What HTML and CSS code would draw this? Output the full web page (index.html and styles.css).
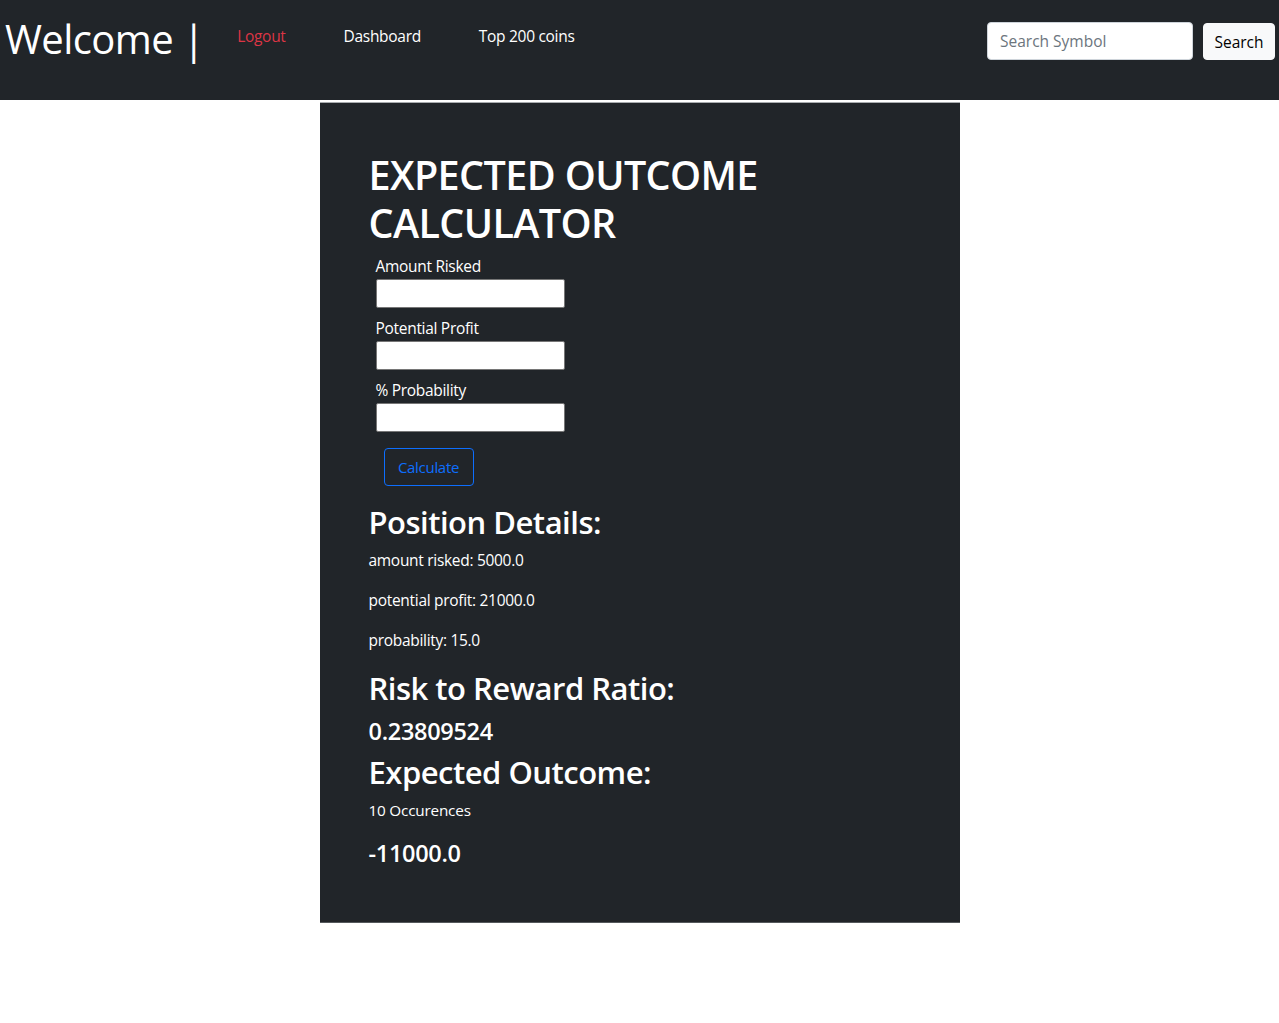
FILE: index.html
```html
<!DOCTYPE html>
<html>
<head>
<meta charset="utf-8">
<link rel="stylesheet" href="styles.css">
</head>
<body>
<nav class="navbar">
  <div class="brand">Welcome |</div>
  <ul class="links">
    <li><a class="link logout" href="#">Logout</a></li>
    <li><a class="link" href="#">Dashboard</a></li>
    <li><a class="link" href="#">Top 200 coins</a></li>
  </ul>
  <form class="search">
    <input class="search-input" type="text" placeholder="Search Symbol">
    <button class="search-btn" type="button">Search</button>
  </form>
</nav>
<main class="panel">
  <h1 class="title">EXPECTED OUTCOME CALCULATOR</h1>
  <form class="calc">
    <label class="field-label">Amount Risked</label>
    <input class="field" type="text">
    <label class="field-label">Potential Profit</label>
    <input class="field" type="text">
    <label class="field-label">% Probability</label>
    <input class="field" type="text">
    <button class="calc-btn" type="button">Calculate</button>
  </form>
  <h2 class="h2">Position Details:</h2>
  <p class="p">amount risked: 5000.0</p>
  <p class="p">potential profit: 21000.0</p>
  <p class="p">probability: 15.0</p>
  <h2 class="h2">Risk to Reward Ratio:</h2>
  <h4 class="h4">0.23809524</h4>
  <h2 class="h2">Expected Outcome:</h2>
  <p class="small">10 Occurences</p>
  <h4 class="h4">-11000.0</h4>
</main>
</body>
</html>
```
FILE: styles.css
```css
* { box-sizing: border-box; }
html, body { margin: 0; padding: 0; }
body {
  font-family: "Open Sans", "Noto Sans", sans-serif;
  font-size: 16px;
  line-height: 1.5;
  color: #212529;
  background: #fff;
}
.navbar {
  background: #212529;
  height: 100px;
  display: flex;
  align-items: flex-start;
  padding: 0 4px 0 5px;
}
.brand {
  color: #fff;
  font-size: 40px;
  line-height: 1;
  margin-top: 19px;
  letter-spacing: -0.6px;
}
.links {
  list-style: none;
  display: flex;
  margin: 24px 0 0 33px;
  padding: 0;
}
.links li { margin-right: 58px; }
.link {
  color: #fff;
  text-decoration: none;
  font-size: 15.5px;
  letter-spacing: -0.3px;
}
.logout { color: #dc3545; }
.search {
  margin-left: auto;
  margin-top: 22px;
  display: flex;
  gap: 10px;
}
.search-input {
  width: 206px;
  height: 38px;
  border: 1px solid #ced4da;
  border-radius: 4px;
  padding: 6px 12px;
  font-family: inherit;
  font-size: 15.5px;
  color: #212529;
  background: #fff;
}
.search-input::placeholder { color: #6c757d; }
.search-btn {
  height: 37px;
  margin-top: 1px;
  width: 72px;
  border: 1px solid #f8f9fa;
  border-radius: 4px;
  background: #f8f9fa;
  color: #000;
  font-family: inherit;
  font-size: 15.5px;
  padding: 0;
}
.panel {
  width: 640px;
  margin: 2px auto 0;
  background: #212529;
  color: #fff;
  padding: 48px 49px 47px;
  border-top: 1px solid #a9acaf;
  border-bottom: 1px solid #55595c;
}
.title {
  margin: 0;
  font-size: 39.5px;
  font-weight: 600;
  line-height: 48px;
  letter-spacing: -0.6px;
}
.calc {
  display: flex;
  flex-direction: column;
  align-items: flex-start;
  padding-left: 7px;
  margin-top: 7px;
}
.field-label {
  font-size: 15.5px;
  line-height: 24px;
  letter-spacing: -0.3px;
}
.field {
  width: 189px;
  height: 29px;
  border: 1px solid #767676;
  border-radius: 2px;
  background: #fff;
  margin: 1px 0 8px;
}
.calc-btn {
  margin: 8px 0 0 8px;
  width: 90px;
  height: 38px;
  border: 1px solid #0d6efd;
  border-radius: 4px;
  background: transparent;
  color: #0d6efd;
  font-family: inherit;
  font-size: 15px;
  letter-spacing: -0.3px;
  padding: 0;
}
.h2 {
  margin: 17px 0 8px;
  font-size: 31px;
  font-weight: 600;
  line-height: 38px;
  letter-spacing: -0.5px;
}
.h2 + .p { margin-top: -1px; }
.h2 + .small { margin-top: 0; }
.p {
  margin: 0 0 16px;
  font-size: 15.5px;
  line-height: 24px;
  letter-spacing: -0.3px;
}
.p + .h2 { margin-top: 0; padding-top: 1px; }
.h4 {
  margin: 5px 0 7px;
  font-size: 23.5px;
  font-weight: 600;
  line-height: 29px;
  letter-spacing: -0.3px;
}
.h2 + .h4 { padding-top: 2px; }
.h4 + .h2 { margin-top: 0; }
.small {
  margin: 0 0 18px;
  font-size: 15.3px;
  line-height: 22px;
  letter-spacing: -0.2px;
}
.small + .h4 { margin-top: 0; }
```
